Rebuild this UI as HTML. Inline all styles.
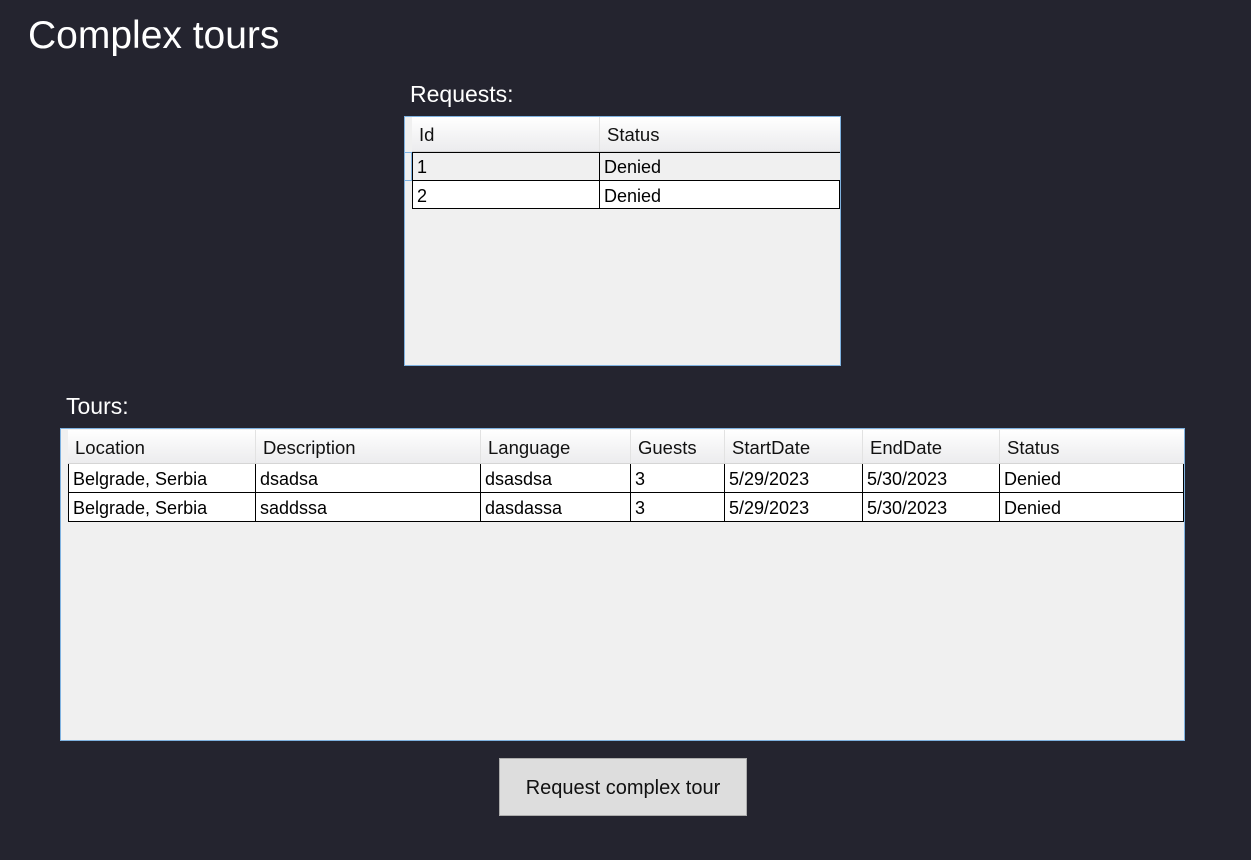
<!DOCTYPE html>
<html><head><meta charset="utf-8"><style>
*{margin:0;padding:0;box-sizing:border-box}
body{width:1251px;height:860px;background:#24242f;font-family:"Liberation Sans","DejaVu Sans",sans-serif;position:relative;overflow:hidden}
.a{position:absolute;white-space:nowrap}
.t{color:#fff}
.box{position:absolute;background:#f0f0f0;border:1px solid #7fb2e0}
.hdr{position:absolute;background:linear-gradient(#ffffff,#f3f3f4 60%,#ececee);border-bottom:1px solid #d5d5d5;font-size:18.5px;color:#111}
.hc{position:absolute;top:0;height:100%;border-left:1px solid #e2e2e2;padding-left:7px;line-height:35px}
.row{position:absolute;border-bottom:1px solid #000;font-size:18px;color:#000}
.c{position:absolute;top:0;height:100%;border-left:1px solid #000;padding-left:4px;line-height:30px}
</style></head><body>
<div class="a t" style="left:28px;top:14px;font-size:39px">Complex tours</div>
<div class="a t" style="left:410px;top:81px;font-size:23px">Requests:</div>
<div class="box" style="left:404px;top:116px;width:437px;height:250px">
  <div class="hdr" style="left:7px;top:0;width:428px;height:35px">
    <div class="hc" style="left:0;width:188px;border-left:none">Id</div>
    <div class="hc" style="left:187px;width:241px">Status</div>
  </div>
  <div class="row" style="left:7px;top:35px;width:428px;height:29px;background:#f0f0f0;border-top:1px solid #000">
    <div class="c" style="left:0;border-left:1px solid #000;line-height:28px">1</div><div class="c" style="left:187px;line-height:28px">Denied</div>
  </div>
  <div class="row" style="left:7px;top:64px;width:428px;height:28px;background:#fff;border-right:1px solid #000">
    <div class="c" style="left:0">2</div><div class="c" style="left:187px">Denied</div>
  </div>
  <div class="a" style="left:0;top:35px;width:7px;height:29px;border:1px solid #7fb2e0;border-left:none;background:#f0f0f0"></div>
</div>
<div class="a t" style="left:66px;top:393px;font-size:23px">Tours:</div>
<div class="box" style="left:60px;top:428px;width:1125px;height:313px">
  <div class="hdr" style="left:7px;top:1px;width:1116px;height:34px">
    <div class="hc" style="left:0;border-left:none">Location</div>
    <div class="hc" style="left:187px">Description</div>
    <div class="hc" style="left:412px">Language</div>
    <div class="hc" style="left:562px">Guests</div>
    <div class="hc" style="left:656px">StartDate</div>
    <div class="hc" style="left:794px">EndDate</div>
    <div class="hc" style="left:931px">Status</div>
  </div>
  <div class="row" style="left:7px;top:35px;width:1116px;height:29px;background:#fff;border-right:1px solid #000">
    <div class="c" style="left:0">Belgrade, Serbia</div><div class="c" style="left:187px">dsadsa</div><div class="c" style="left:412px">dsasdsa</div><div class="c" style="left:562px">3</div><div class="c" style="left:656px">5/29/2023</div><div class="c" style="left:794px">5/30/2023</div><div class="c" style="left:931px">Denied</div>
  </div>
  <div class="row" style="left:7px;top:64px;width:1116px;height:29px;background:#fff;border-right:1px solid #000">
    <div class="c" style="left:0">Belgrade, Serbia</div><div class="c" style="left:187px">saddssa</div><div class="c" style="left:412px">dasdassa</div><div class="c" style="left:562px">3</div><div class="c" style="left:656px">5/29/2023</div><div class="c" style="left:794px">5/30/2023</div><div class="c" style="left:931px">Denied</div>
  </div>
</div>
<div class="a" style="left:499px;top:758px;width:248px;height:58px;background:#dddddd;border:1px solid #adadad;font-size:20px;color:#111;text-align:center;line-height:58px">Request complex tour</div>
</body></html>
